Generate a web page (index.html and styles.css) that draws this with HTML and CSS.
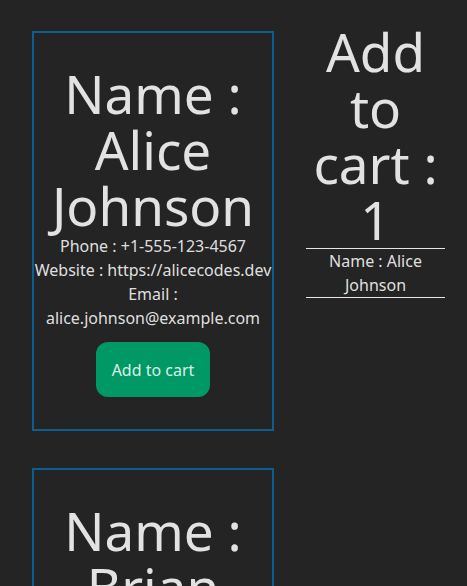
FILE: index.html
```html
<!DOCTYPE html>
<html>
<head>
<meta charset="utf-8">
<link rel="stylesheet" href="styles.css">
</head>
<body>
<div class="page">
  <div class="cards">
    <div class="card">
      <h1 class="card-title">Name : Alice Johnson</h1>
      <p class="line">Phone : +1-555-123-4567</p>
      <p class="line">Website : https://alicecodes.dev</p>
      <p class="line">Email : alice.johnson@example.com</p>
      <button class="btn">Add to cart</button>
    </div>
    <div class="card">
      <h1 class="card-title">Name : Brian Smith</h1>
      <p class="line">Phone : +1-555-987-6543</p>
      <p class="line">Website : https://briansmith.io</p>
      <p class="line">Email : brian.smith@example.com</p>
      <button class="btn">Add to cart</button>
    </div>
  </div>
  <div class="cart">
    <h1 class="cart-title">Add to cart : 1</h1>
    <p class="cart-item">Name : Alice Johnson</p>
  </div>
</div>
</body>
</html>
```
FILE: styles.css
```css
html, body {
  margin: 0;
  padding: 0;
  background: #242424;
}
body {
  font-family: "Noto Sans", sans-serif;
  font-size: 16px;
  line-height: 24px;
  color: rgba(255, 255, 255, 0.87);
}
.page {
  display: flex;
  align-items: flex-start;
  gap: 32px;
  padding: 24px 0 0 32px;
}
.cards {
  display: flex;
  flex-direction: column;
  gap: 37px;
  margin-top: 7px;
  width: 242px;
  flex: none;
}
.card {
  box-sizing: border-box;
  width: 242px;
  border: 2px solid #0b5e92;
  text-align: center;
  padding: 33px 0 32px;
}
.card-title, .cart-title {
  margin: 0;
  font-size: 53px;
  line-height: 56px;
  font-weight: 400;
}
.line {
  margin: 0;
}
.btn {
  margin-top: 12px;
  width: 114px;
  height: 55px;
  border: none;
  border-radius: 12px;
  background: #009966;
  color: rgba(255, 255, 255, 0.87);
  font-family: "Noto Sans", sans-serif;
  font-size: 16px;
  padding: 0;
  cursor: pointer;
}
.cart {
  width: 139px;
  flex: none;
  text-align: center;
}
.cart-item {
  margin: 0;
  border-top: 1px solid #e6e6e6;
  border-bottom: 1px solid #e6e6e6;
}
```
